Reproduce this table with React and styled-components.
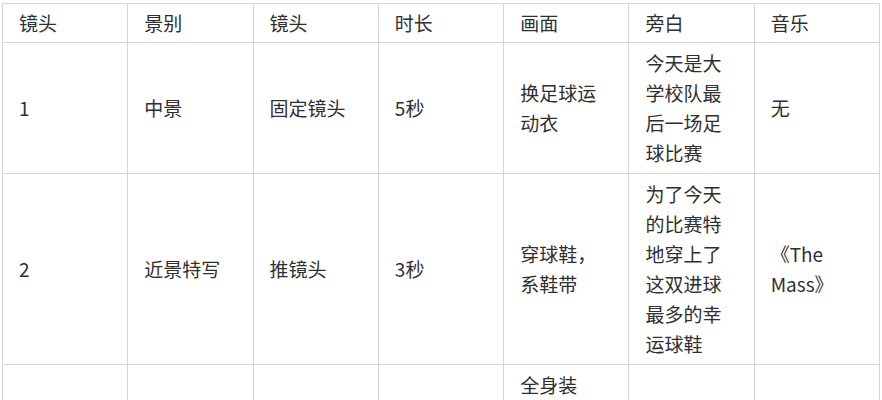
import React from "react";
import styled, { createGlobalStyle } from "styled-components";

const Global = createGlobalStyle`
  html, body { margin: 0; padding: 0; background: #ffffff; }
  body { font-family: "Noto Sans CJK SC", "Noto Sans", sans-serif; }
`;

const Page = styled.div`
  padding: 3px 2px 0 2px;
`;

const Table = styled.table`
  width: 878px;
  table-layout: fixed;
  border-collapse: collapse;
  color: #2f2f2f;
  font-family: "Noto Sans CJK SC", "Noto Sans", sans-serif;
  font-size: 19px;
  line-height: 30px;
`;

const Cell = styled.td`
  border: 1px solid #d6d6d6;
  padding: 5px 16px;
  vertical-align: middle;
  text-align: left;
  word-break: normal;
  overflow-wrap: anywhere;
  font-weight: 400;
`;

const HeadCell = styled(Cell).attrs({ as: "th" })`
  padding: 4px 16px;
`;

const headers = ["镜头", "景别", "镜头", "时长", "画面", "旁白", "音乐"];

const rows = [
  ["1", "中景", "固定镜头", "5秒", "换足球运动衣", "今天是大学校队最后一场足球比赛", "无"],
  ["2", "近景特写", "推镜头", "3秒", "穿球鞋，系鞋带", "为了今天的比赛特地穿上了这双进球最多的幸运球鞋", "《The Mass》"],
  ["3", "全景", "跟镜头", "4秒", "全身装备，走出更衣室，穿过走廊，走向球场，和队友们会合", "出发", "无"],
];

export default function App() {
  return (
    <>
      <Global />
      <Page>
        <Table>
          <thead>
            <tr>
              {headers.map((h, i) => (
                <HeadCell key={i}>{h}</HeadCell>
              ))}
            </tr>
          </thead>
          <tbody>
            {rows.map((r, ri) => (
              <tr key={ri}>
                {r.map((c, ci) => (
                  <Cell key={ci}>{c}</Cell>
                ))}
              </tr>
            ))}
          </tbody>
        </Table>
      </Page>
    </>
  );
}
